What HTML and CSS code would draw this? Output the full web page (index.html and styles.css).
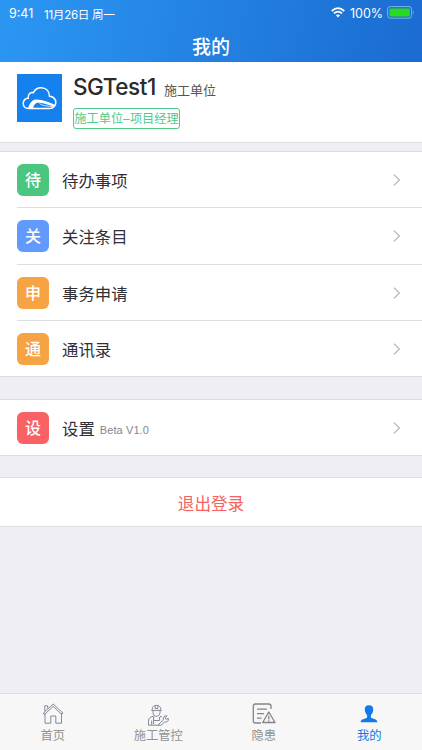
FILE: index.html
```html
<!DOCTYPE html>
<html lang="zh-CN">
<head>
<meta charset="utf-8">
<title>我的</title>
<link rel="stylesheet" href="styles.css">
</head>
<body>
<div class="app">
  <header class="header">
    <div class="status">
      <span class="time">9:41</span>
      <span class="date">11月26日 周一</span>
      <svg class="wifi" width="14" height="11" viewBox="0 0 14 11" fill="none" stroke="#fff" stroke-width="1.7">
        <path d="M.7 4Q7-1.6 13.3 4M2.9 6.4q4.1-3.5 8.2 0"/>
        <path d="M7 10.5 4.9 8.3q2.1-1.7 4.2 0z" fill="#fff" stroke="none"/>
      </svg>
      <span class="percent">100%</span>
      <svg class="battery" width="28" height="13" viewBox="0 0 28 13">
        <rect x=".6" y=".6" width="24" height="11.6" rx="2.6" fill="none" stroke="#7db4ee"/>
        <rect x="2.4" y="2.4" width="20.4" height="8" rx="1" fill="#27dc20"/>
        <path d="M26 4.500q1.600 1.900 0 3.800z" fill="#7db4ee"/>
      </svg>
    </div>
    <h1 class="title">我的</h1>
  </header>

  <section class="profile">
    <svg class="avatar" width="45" height="48" viewBox="0 0 45 48">
      <rect width="45" height="48" fill="#1482ee"/>
      <path d="M11.500 34.500C8 34.500 6.200 32.200 6.200 29.500c0-3.200 2.200-5.400 5-5.300-.5-3.700 2-6.200 5.200-5.500 1.300-3 4.100-5 7.600-5 5 0 8.300 3.500 8.500 8.500 3.700.2 6.300 2.900 6.300 6.200 0 3.500-2.600 6.100-6.200 6.100z" fill="none" stroke="#fff" stroke-width="1.500"/>
      <path d="M11 34.500c1.300-4.300 3.500-8.500 7.500-9 7-.2 13.500 2.500 20 5.500l-1.500 1.500c-7-2-13-4.500-17-3.700-2.500.8-3.300 3.200-4 5.700z" fill="#fff"/>
      <path d="M22.500 29.500q3 2.700 14 3l-3 2h-15" fill="none" stroke="#fff" stroke-width=".8"/>
    </svg>
    <div class="identity">
      <div class="name-line"><span class="name">SGTest1</span><span class="unit">施工单位</span></div>
      <span class="role">施工单位–项目经理</span>
    </div>
  </section>

  <nav class="group menu">
    <div class="row"><span class="badge green">待</span><span class="label">待办事项</span><svg class="chevron" width="8" height="12" viewBox="0 0 8 12"><path d="m1 .8 5.500 5.200L1 11.200"/></svg></div>
    <div class="row"><span class="badge blue">关</span><span class="label">关注条目</span><svg class="chevron" width="8" height="12" viewBox="0 0 8 12"><path d="m1 .8 5.500 5.200L1 11.200"/></svg></div>
    <div class="row"><span class="badge orange">申</span><span class="label">事务申请</span><svg class="chevron" width="8" height="12" viewBox="0 0 8 12"><path d="m1 .8 5.500 5.200L1 11.200"/></svg></div>
    <div class="row"><span class="badge orange">通</span><span class="label">通讯录</span><svg class="chevron" width="8" height="12" viewBox="0 0 8 12"><path d="m1 .8 5.500 5.200L1 11.200"/></svg></div>
  </nav>

  <nav class="group settings">
    <div class="row"><span class="badge red">设</span><span class="label">设置</span><span class="version">Beta V1.0</span><svg class="chevron" width="8" height="12" viewBox="0 0 8 12"><path d="m1 .8 5.500 5.200L1 11.200"/></svg></div>
  </nav>

  <button class="group logout">退出登录</button>

  <footer class="tabbar">
    <a class="tab">
      <svg width="24" height="24" viewBox="0 0 24 24" fill="none" stroke="#858996">
        <path d="M4 11v10.200h5.800V14h5v7.200h5.700V11"/>
        <path d="M2.200 11.200 12.200 2l9.800 9.200-1.200 1.300-8.600-8.100-8.800 8.100zM3.800 9.200V3.800h2.900v2.700"/>
      </svg>
      <span>首页</span>
    </a>
    <a class="tab raised">
      <svg width="24" height="24" viewBox="0 0 24 24" fill="none" stroke="#858996">
        <path d="M6.200 8.300v-1C6.200 4.800 8 3.300 10.500 3.300s4.300 1.500 4.300 4v1M5.300 8.400h10.400M9.200 3.500v3h2.700v-3M7 8.500v2c0 5 7 5 7 0v-2"/>
        <path d="M8.200 14.200c-3.500.4-5.700 1.500-5.700 5v4h12M5.700 23v-4.500M7.600 15v3.500h6V15M7.600 18.500v3.700M14 14.300l2 .6"/>
        <path d="m12.800 22.200 4.600-4.300c-.7-2.500 1.100-4.500 3.500-4.200l-1.700 2 .9 1.600 2.300-.8c.4 2.600-1.500 4.100-3.800 3.500l-4.300 3.900c-1.200.7-2.300-.4-1.500-1.700z"/>
      </svg>
      <span>施工管控</span>
    </a>
    <a class="tab">
      <svg width="24" height="24" viewBox="0 0 24 24" fill="none" stroke="#858589" stroke-width="1.300">
        <path d="M9 21H3.500Q1.300 21 1.300 18.800V4.200Q1.300 2 3.500 2h13.200Q19 2 19 4.200V7M5 7.200h10M5 11.700h7M5 16.200h4.500"/>
        <path d="m16.800 10 6.200 10.500H10.700zM16.800 13.800v3.700M16.800 18.300v1.200" stroke-linejoin="round"/>
      </svg>
      <span>隐患</span>
    </a>
    <a class="tab active">
      <svg width="24" height="24" viewBox="0 0 24 24" fill="#1279ea">
        <path d="M12 3.300c3 0 4.500 2 4.200 4.700-.2 2.300-1.300 4.200-2.300 5.300v2.300c1 1.500 6.300.9 6.500 4.700H3.600c.2-3.800 5.500-3.200 6.500-4.700v-2.300c-1-1.100-2.100-3-2.300-5.300C7.500 5.300 9 3.300 12 3.300z"/>
      </svg>
      <span>我的</span>
    </a>
  </footer>
</div>
</body>
</html>
```
FILE: styles.css
```css
* { box-sizing: border-box; }
body {
  margin: 0;
  font-family: "Liberation Sans", "Noto Sans CJK SC", sans-serif;
  color: #303039;
}
.app {
  width: 422px;
  height: 750px;
  display: flex;
  flex-direction: column;
  background: #efeef4;
  overflow: hidden;
}
.header {
  height: 62px;
  flex: none;
  color: #fff;
  background: linear-gradient(100deg, #2b97f3, #1b6bd0);
}
.status {
  height: 27px;
  display: flex;
  align-items: center;
  padding: 0 7px 0 9px;
  font-family: Inter, "Noto Sans CJK SC", sans-serif;
  font-size: 12.5px;
}
.time { width: 35px; }
.date { font-size: 11.6px; letter-spacing: -.3px; margin-right: auto; }
.wifi { margin: 0 5px 3px 0; }
.percent { width: 37px; white-space: nowrap; }
.battery { margin-bottom: 2px; }
.title {
  margin: 0;
  font-size: 19px;
  line-height: 42px;
  font-weight: 500;
  text-align: center;
}
.profile {
  height: 81px;
  flex: none;
  display: flex;
  padding: 12px 17px 0;
  background: #fff;
  border-bottom: 1px solid #dcdce2;
}
.avatar { margin-right: 11px; }
.name-line { display: flex; align-items: baseline; height: 34px; line-height: 26px; }
.name {
  width: 85px;
  font-family: Inter, sans-serif;
  font-size: 22.5px;
  font-weight: 500;
  letter-spacing: -.45px;
  white-space: nowrap;
  color: #2b2b2b;
}
.unit { margin-left: 6px; font-size: 13px; color: #555; }
.role {
  display: block;
  width: 107px;
  height: 21px;
  border: 1px solid #50c98c;
  border-radius: 3px;
  color: #50c98c;
  font-size: 12.2px;
  line-height: 20px;
  text-align: center;
  white-space: nowrap;
}
.group {
  flex: none;
  background: #fff;
  border: solid #dcdce2;
  border-width: 1px 0;
}
.menu { margin-top: 8px; }
.settings { margin-top: 22px; }
.row {
  height: 56.25px;
  margin-left: 17px;
  padding: 1px 21px 0 0;
  display: flex;
  align-items: center;
  border-bottom: 1px solid #dfdfe3;
}
.row:last-child { height: 55.25px; border-bottom: 0; }
.badge {
  width: 32px;
  height: 32px;
  margin-right: 13px;
  border-radius: 6px;
  color: #fff;
  font-size: 16px;
  font-weight: 500;
  line-height: 34px;
  text-align: center;
}
.green { background: #4bc681; }
.blue { background: #6199fc; }
.orange { background: #f6a343; }
.red { background: #fa6165; }
.label { font-size: 16.4px; }
.version { margin: 4px 0 0 5px; font-size: 11px; color: #858590; letter-spacing: .1px; }
.chevron { margin-left: auto; fill: none; stroke: #b7b7bc; stroke-width: 1.2; }
.logout {
  height: 50px;
  margin-top: 21px;
  padding: 1px 0 0;
  color: #f4635f;
  font: 16.6px "Noto Sans CJK SC", sans-serif;
}
.tabbar {
  height: 57px;
  flex: none;
  margin-top: auto;
  display: grid;
  grid-template-columns: repeat(4, 1fr);
  background: #f7f7f8;
  border-top: 1px solid #dddde3;
}
.tab {
  display: flex;
  flex-direction: column;
  align-items: center;
  padding-top: 8px;
  font-size: 12.3px;
  line-height: 18px;
  color: #929294;
}
.tab span { margin-top: 1px; }
.active { color: #1279ea; }
```
